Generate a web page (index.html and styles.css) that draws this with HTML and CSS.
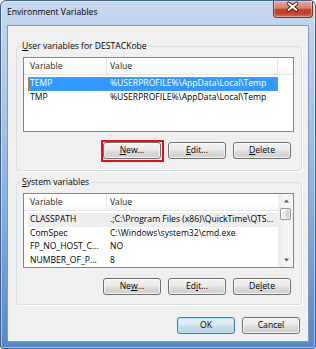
FILE: index.html
```html
<!DOCTYPE html>
<html>
<head>
<meta charset="utf-8">
<link rel="stylesheet" href="styles.css">
</head>
<body>
<div class="window">
  <div class="titlebar">
    <span class="title">Environment Variables</span>
    <div class="close">
      <svg width="40" height="17" viewBox="0 0 40 17">
        <path d="M15.5 3.5 L23.5 10 M23.5 3.5 L15.5 10" stroke="#4b1c16" stroke-width="3.6" stroke-linecap="round" fill="none"/>
        <path d="M15.5 3.5 L23.5 10 M23.5 3.5 L15.5 10" stroke="#ffffff" stroke-width="1.9" stroke-linecap="round" fill="none"/>
      </svg>
    </div>
  </div>
  <div class="client">
    <fieldset class="group g1">
      <legend><u>U</u>ser variables for DESTACKobe</legend>
      <div class="listview">
        <div class="lv-main">
          <div class="lv-header">
            <div class="hc hc1">Variable</div>
            <div class="hc hc2">Value</div>
            <div class="hc hfill"></div>
          </div>
          <div class="lv-rows">
            <div class="row selected"><span class="c1">TEMP</span><span class="c2">%USERPROFILE%\AppData\Local\Temp</span></div>
            <div class="row"><span class="c1">TMP</span><span class="c2">%USERPROFILE%\AppData\Local\Temp</span></div>
          </div>
        </div>
      </div>
      <div class="btnrow">
        <button class="btn marked"><u>N</u>ew...</button>
        <button class="btn"><u>E</u>dit...</button>
        <button class="btn"><u>D</u>elete</button>
      </div>
    </fieldset>
    <fieldset class="group g2">
      <legend><u>S</u>ystem variables</legend>
      <div class="listview">
        <div class="lv-main">
          <div class="lv-header">
            <div class="hc hc1">Variable</div>
            <div class="hc hc2 last">Value</div>
          </div>
          <div class="lv-rows">
            <div class="row inactive"><span class="c1">CLASSPATH</span><span class="c2">.;C:\Program Files (x86)\QuickTime\QTS...</span></div>
            <div class="row"><span class="c1">ComSpec</span><span class="c2">C:\Windows\system32\cmd.exe</span></div>
            <div class="row"><span class="c1">FP_NO_HOST_C...</span><span class="c2">NO</span></div>
            <div class="row"><span class="c1">NUMBER_OF_P...</span><span class="c2">8</span></div>
          </div>
        </div>
        <div class="scrollbar">
          <div class="sb-btn">
            <svg width="15" height="14" viewBox="0 0 15 14"><path d="M5 8.5 L7.5 5.5 L10 8.5 Z" fill="#4d5a6b"/></svg>
          </div>
          <div class="sb-track"><div class="thumb"></div></div>
          <div class="sb-btn">
            <svg width="15" height="14" viewBox="0 0 15 14"><path d="M5 5.5 L10 5.5 L7.5 8.5 Z" fill="#4d5a6b"/></svg>
          </div>
        </div>
      </div>
      <div class="btnrow">
        <button class="btn">Ne<u>w</u>...</button>
        <button class="btn">Ed<u>i</u>t...</button>
        <button class="btn">De<u>l</u>ete</button>
      </div>
    </fieldset>
    <div class="dlg-buttons">
      <button class="btn default">OK</button>
      <button class="btn">Cancel</button>
    </div>
  </div>
</div>
</body>
</html>
```

FILE: styles.css
```css
* { box-sizing: border-box; }
html, body { margin: 0; padding: 0; }
body {
  width: 316px;
  height: 349px;
  overflow: hidden;
  background: #ffffff;
  font-family: "Open Sans", "Liberation Sans", sans-serif;
  font-size: 8.6px;
  color: #000;
}
.window {
  width: 316px;
  height: 349px;
  display: flex;
  flex-direction: column;
  padding: 0 6px 6px 6px;
  border: 1px solid #3f6390;
  border-radius: 6px 6px 3px 3px;
  background: linear-gradient(180deg, #c6d9f0 0%, #bad0eb 12%, #9fbfe4 40%, #7ba4d6 70%, #5787c4 100%);
  box-shadow: inset 0 0 0 1px rgba(255,255,255,0.45);
}
.titlebar {
  height: 24px;
  display: flex;
  align-items: flex-start;
  flex: none;
}
.title {
  margin-top: 5px;
  line-height: 12px;
  white-space: nowrap;
}
.close {
  margin-left: auto;
  margin-right: -4px;
  width: 40px;
  height: 17px;
  border: 1px solid #6f342c;
  border-top: none;
  border-radius: 0 0 4px 4px;
  background: linear-gradient(180deg, #e6a99c 0%, #d6806f 45%, #c4412b 52%, #c24532 80%, #d5735c 100%);
  box-shadow: inset 0 0 0 1px rgba(255,255,255,0.35);
}
.close svg { display: block; margin: -1px 0 0 -1px; }
.client {
  flex: 1;
  background: #f0f0f0;
  border: 1px solid #8599b5;
  display: flex;
  flex-direction: column;
}
.group {
  min-width: 0;
  margin: 0 6px 0 8px;
  border: 1px solid #d5dfe5;
  border-radius: 3px;
  box-shadow: 1px 1px 0 #ffffff;
  padding: 5px 7px 11px 6px;
}
.g1 { margin-top: 14px; }
.g2 { margin-top: 5px; padding-bottom: 9px; }
legend {
  padding: 0 1px;
  margin-left: -2px;
  line-height: 12px;
  white-space: nowrap;
}
.listview {
  height: 75px;
  border: 1px solid #828790;
  background: #ffffff;
  display: flex;
}
.lv-main { flex: 1; min-width: 0; }
.lv-header {
  height: 17px;
  display: flex;
  border-bottom: 1px solid #e5e5e5;
  background: linear-gradient(180deg, #ffffff 0%, #ffffff 55%, #f7f8f9 100%);
}
.hc {
  line-height: 16px;
  white-space: nowrap;
  color: #1e1e1e;
}
.hc1 { width: 83px; padding-left: 6px; border-right: 1px solid #e5e5e5; }
.hc2 { width: 171px; padding-left: 3px; border-right: 1px solid #e5e5e5; }
.hc2.last { border-right: none; }
.hfill { flex: 1; }
.lv-rows { margin-top: 2px; }
.row {
  display: flex;
  height: 13.5px;
  line-height: 13.5px;
  margin-left: 4px;
  width: 250px;
  white-space: nowrap;
}
.row .c1 { width: 79px; padding-left: 2px; overflow: hidden; flex: none; }
.row .c2 { flex: 1; padding-left: 3px; overflow: hidden; }
.row.selected {
  background: #3399ff;
  color: #ffffff;
  outline: 1px dotted #c98a3c;
  outline-offset: -1px;
}
.row.inactive { background: #ededed; }
.scrollbar {
  width: 15px;
  flex: none;
  display: flex;
  flex-direction: column;
  background: linear-gradient(90deg, #ececec 0%, #f5f5f5 40%, #f4f4f4 100%);
  border-left: 1px solid #f0f0f0;
}
.sb-btn { height: 14px; flex: none; }
.sb-btn svg { display: block; }
.sb-track { flex: 1; }
.thumb {
  width: 11px;
  height: 12px;
  margin: 0 0 0 1px;
  border: 1px solid #959595;
  border-radius: 2px;
  background: linear-gradient(90deg, #f4f4f4 0%, #e8e8e8 50%, #d6d6d6 51%, #cfcfcf 100%);
  box-shadow: inset 0 0 0 1px rgba(255,255,255,0.7);
}
.btnrow {
  display: flex;
  justify-content: flex-end;
  gap: 7px;
  margin-top: 10px;
  padding-right: 3px;
}
.btn {
  width: 58px;
  height: 17px;
  padding: 0;
  margin: 0;
  font: inherit;
  line-height: 15px;
  color: #000;
  text-align: center;
  border: 1px solid #707070;
  border-radius: 3px;
  background: linear-gradient(180deg, #f2f2f2 0%, #ebebeb 48%, #dddddd 52%, #cfcfcf 100%);
  box-shadow: inset 0 0 0 1px rgba(255,255,255,0.75);
}
.btn.marked { position: relative; }
.btn.marked::after {
  content: "";
  position: absolute;
  left: -3px;
  top: -3px;
  right: -4px;
  bottom: -4px;
  border: 2px solid #e3101c;
}
.btn.default {
  border-color: #3c7fb1;
  background: linear-gradient(180deg, #e8f2f9 0%, #dbe9f3 48%, #c9dde9 52%, #bdd4e3 100%);
  box-shadow: inset 0 0 0 1px rgba(170,230,250,0.9);
}
.dlg-buttons {
  display: flex;
  justify-content: flex-end;
  gap: 7px;
  margin: 12px 8px 0 0;
}
```
